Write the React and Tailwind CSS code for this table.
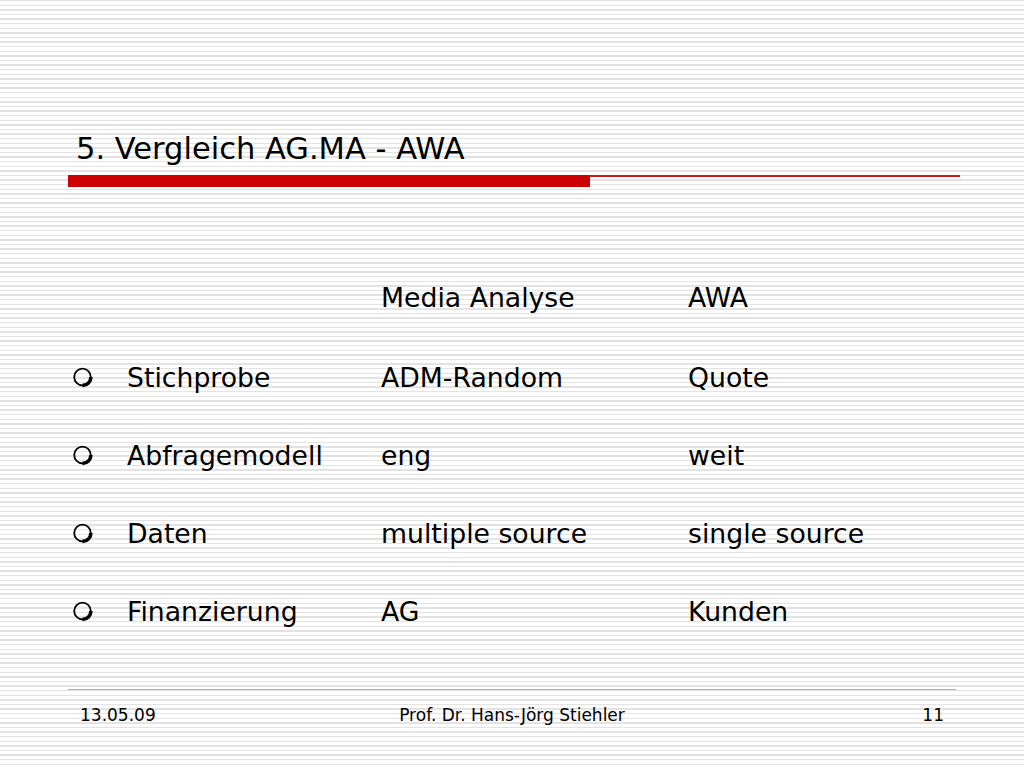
const rows = [
  ["Stichprobe", "ADM-Random", "Quote"],
  ["Abfragemodell", "eng", "weit"],
  ["Daten", "multiple source", "single source"],
  ["Finanzierung", "AG", "Kunden"],
];

const Bullet = () => (
  <svg width="24" height="24" viewBox="0 0 24 24" className="shrink-0">
    <circle cx="10.5" cy="11" r="8.3" fill="none" stroke="#000" strokeWidth="1.8" />
    <path d="M18.9 11 A8.4 8.4 0 0 1 10.5 19.4" fill="none" stroke="#000" strokeWidth="3.6" />
  </svg>
);

export default function App() {
  return (
    <div className="w-[1024px] h-[768px] overflow-hidden bg-[repeating-linear-gradient(to_bottom,#e3e3e3_0px,#e3e3e3_1.5px,#ffffff_1.5px,#ffffff_4.6px)] font-['DejaVu_Sans',Verdana,sans-serif] text-black flex flex-col">
      <div className="pt-[130px] pl-[76px] text-[30.5px] leading-[38px]">5. Vergleich AG.MA - AWA</div>
      <div className="mt-[7px] ml-[68px] flex items-start">
        <div className="w-[522px] h-[12px] bg-[#cc0000]" />
        <div className="w-[370px] h-[2px] bg-[#d21a1a]" />
      </div>

      <div className="mt-[96px] text-[26.7px]">
        <div className="flex items-center h-[30px]">
          <div className="w-[381px]" />
          <div className="w-[307px]">Media Analyse</div>
          <div>AWA</div>
        </div>
        <div className="mt-[50px] flex flex-col gap-[48px]">
          {rows.map(([a, b, c]) => (
            <div key={a} className="flex items-center h-[30px]">
              <div className="w-[127px] pl-[72px]"><Bullet /></div>
              <div className="w-[254px]">{a}</div>
              <div className="w-[307px]">{b}</div>
              <div>{c}</div>
            </div>
          ))}
        </div>
      </div>

      <div className="mt-auto mb-[41px]">
        <div className="ml-[68px] w-[888px] h-[1px] bg-[#c9a9a9]" />
        <div className="mt-[15px] flex items-center text-[17px] h-[22px] px-[80px]">
          <div className="w-[200px]">13.05.09</div>
          <div className="flex-1 text-center">Prof. Dr. Hans-Jörg Stiehler</div>
          <div className="w-[200px] text-right pr-[0px]">11</div>
        </div>
      </div>
    </div>
  );
}
